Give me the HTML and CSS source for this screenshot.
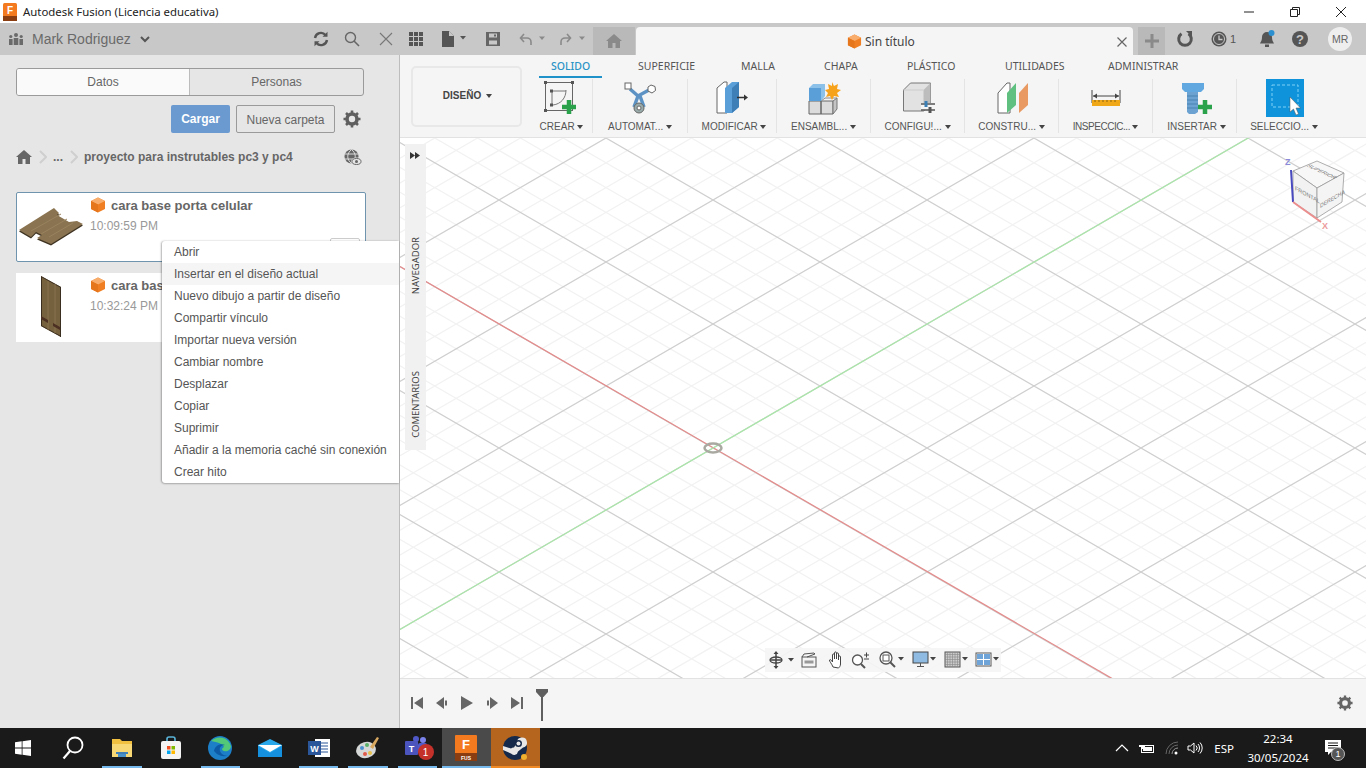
FILE: index.html
```html
<!DOCTYPE html>
<html lang="es">
<head>
<meta charset="utf-8">
<title>Autodesk Fusion</title>
<link rel="stylesheet" href="styles.css">
</head>
<body>
<div class="app">
  <header class="titlebar">
    <svg class="app-logo" width="14" height="18" viewBox="0 0 14 18"><rect width="14" height="18" rx="1.5" fill="#f47a20"/><rect y="13" width="14" height="5" fill="#8a3d10"/><text x="7" y="10.5" class="logo-f">F</text></svg>
    <span class="title-text">Autodesk Fusion (Licencia educativa)</span>
    <div class="win-controls">
      <svg width="12" height="12" viewBox="0 0 12 12"><path d="M1 6h10" stroke="#222" fill="none"/></svg>
      <svg width="12" height="12" viewBox="0 0 12 12"><path d="M1.5 3.5h7v7h-7zM3.5 3.5v-2h7v7h-2" stroke="#222" fill="none"/></svg>
      <svg width="12" height="12" viewBox="0 0 12 12"><path d="M1 1l10 10M11 1L1 11" stroke="#222" fill="none"/></svg>
    </div>
  </header>

  <div class="appbar">
    <div class="appbar-left">
      <svg width="16" height="14" viewBox="0 0 16 14" fill="#6a6a6a"><circle cx="8" cy="3" r="2"/><circle cx="2.8" cy="4.5" r="1.6"/><circle cx="13.2" cy="4.5" r="1.6"/><rect x="5.7" y="6" width="4.6" height="7"/><rect x="1" y="7" width="3.6" height="6"/><rect x="11.4" y="7" width="3.6" height="6"/></svg>
      <span class="user-name">Mark Rodriguez</span>
      <svg class="user-chevron" width="10" height="7" viewBox="0 0 10 7"><path d="M1 1l4 4 4-4" stroke="#555" stroke-width="2" fill="none"/></svg>
    </div>
    <div class="appbar-tools">
      <svg width="16" height="16" viewBox="0 0 16 16" class="t-refresh"><path d="M2 7a6 6 0 0 1 10.5-3M14 9a6 6 0 0 1-10.5 3" stroke="#555" stroke-width="2.4" fill="none"/><path d="M14.5 0.8v5h-5zM1.5 15.2v-5h5z" fill="#555"/></svg>
      <svg width="16" height="16" viewBox="0 0 16 16" class="t-search"><circle cx="6.5" cy="6.5" r="5" stroke="#666" stroke-width="1.4" fill="none"/><path d="M10 10l5 5" stroke="#666" stroke-width="1.6"/></svg>
      <svg width="14" height="14" viewBox="0 0 14 14" class="t-close"><path d="M1 1l12 12M13 1L1 13" stroke="#777" stroke-width="1.1"/></svg>
      <svg width="14" height="14" viewBox="0 0 14 14" class="t-grid" fill="#555"><path d="M0 0h4v4H0zM5 0h4v4H5zM10 0h4v4h-4zM0 5h4v4H0zM5 5h4v4H5zM10 5h4v4h-4zM0 10h4v4H0zM5 10h4v4H5zM10 10h4v4h-4z"/></svg>
      <svg width="26" height="16" viewBox="0 0 26 16" class="t-file"><path d="M0 0h7l5 5v11H0z" fill="#555"/><path d="M7 0v5h5" fill="#c8c8c8"/><path d="M18 5h6l-3 3.5z" fill="#555"/></svg>
      <svg width="14" height="14" viewBox="0 0 14 14" class="t-save"><path d="M0 0h14v14H0z" fill="#666"/><path d="M3 1.5h8v4H3zM3 8.5h8v4H3z" fill="#c8c8c8"/><path d="M8 2.500h2v2H8z" fill="#666"/></svg>
      <svg width="26" height="14" viewBox="0 0 26 14" class="t-undo"><path d="M5 2L1.500 6 5 10M2 6h6a4 4 0 0 1 4 4v3" stroke="#8a8a8a" stroke-width="1.6" fill="none"/><path d="M20 4.500h6l-3 3.500z" fill="#8a8a8a"/></svg>
      <svg width="26" height="14" viewBox="0 0 26 14" class="t-redo"><path d="M7 2l3.500 4L7 10M10 6H5a4 4 0 0 0-4 4v3" stroke="#8a8a8a" stroke-width="1.6" fill="none"/><path d="M19 4.500h6l-3 3.500z" fill="#8a8a8a"/></svg>
    </div>
    <div class="home-tab">
      <svg width="16" height="14" viewBox="0 0 16 14" fill="#8a8a8a"><path d="M8 0l8 7h-2v7H9.500V9h-3v5H2V7H0z"/></svg>
    </div>
    <div class="doc-tab">
      <svg class="doc-cube" width="15" height="15" viewBox="0 0 16 16"><path d="M8 0.500l7 3.500v8l-7 3.500-7-3.500V4z" fill="#f07f23"/><path d="M8 0.500l7 3.500-7 3.500L1 4z" fill="#f9ad6c"/><path d="M8 7.500v8L1 12V4z" fill="#e5761b"/></svg>
      <span class="doc-title">Sin título</span>
      <svg class="doc-close" width="10" height="10" viewBox="0 0 10 10"><path d="M0.500 0.500l9 9M9.500 0.500l-9 9" stroke="#666" stroke-width="1.200"/></svg>
    </div>
    <div class="plus-tab">
      <svg width="14" height="14" viewBox="0 0 14 14"><path d="M0 7h14M7 0v14" stroke="#8a8a8a" stroke-width="3"/></svg>
    </div>
    <div class="appbar-right">
      <svg width="18" height="18" viewBox="0 0 18 18" class="r-sync"><path d="M12.500 3.800A6.300 6.300 0 1 1 5.500 3.800" stroke="#555" stroke-width="3" fill="none"/><path d="M10 1h6v6z" fill="#555"/></svg>
      <span class="r-jobs">
        <svg width="16" height="16" viewBox="0 0 16 16"><circle cx="8" cy="8" r="7.500" fill="#555"/><circle cx="8" cy="8" r="5.500" fill="none" stroke="#c8c8c8"/><path d="M8 4.500v4h3.500" stroke="#c8c8c8" stroke-width="1.300" fill="none"/></svg>
        <span class="jobs-count">1</span>
      </span>
      <svg width="16" height="18" viewBox="0 0 16 18" class="r-bell"><path d="M8 2a5 5 0 0 1 5 5c0 4 1.500 5 2 6.500H1C1.500 12 3 11 3 7a5 5 0 0 1 5-5z" fill="#555"/><rect x="6" y="14.500" width="4" height="2.500" fill="#555"/><circle cx="12.500" cy="3" r="3" fill="#2c8fd0"/></svg>
      <svg width="18" height="18" viewBox="0 0 18 18" class="r-help"><circle cx="9" cy="9" r="8" fill="#555"/><text x="9" y="13.500" class="help-q">?</text></svg>
      <span class="avatar">MR</span>
    </div>
  </div>

  <div class="content">
    <aside class="datapanel">
      <div class="seg">
        <span class="seg-item seg-on">Datos</span>
        <span class="seg-item">Personas</span>
      </div>
      <div class="actions">
        <span class="btn-primary">Cargar</span>
        <span class="btn-outline">Nueva carpeta</span>
        <svg class="gear" width="18" height="18" viewBox="0 0 18 18"><circle cx="9" cy="9" r="5" fill="none" stroke="#5f5f5f" stroke-width="3.600"/><path d="M9 0.500v3M9 14.500v3M0.500 9h3M14.500 9h3M3 3l2.200 2.200M12.800 12.800L15 15M15 3l-2.200 2.200M5.200 12.800L3 15" stroke="#5f5f5f" stroke-width="2.600"/></svg>
      </div>
      <div class="crumbs">
        <svg width="16" height="14" viewBox="0 0 16 14" fill="#666"><path d="M8 0l8 7h-2v7H9.500V9h-3v5H2V7H0z"/></svg>
        <svg class="crumb-chev" width="8" height="14" viewBox="0 0 8 14"><path d="M1 1l6 6-6 6" stroke="#cfcfcf" stroke-width="2" fill="none"/></svg>
        <span class="crumb-dots">...</span>
        <svg class="crumb-chev" width="8" height="14" viewBox="0 0 8 14"><path d="M1 1l6 6-6 6" stroke="#cfcfcf" stroke-width="2" fill="none"/></svg>
        <span class="crumb-name">proyecto para instrutables pc3 y pc4</span>
        <svg class="crumb-globe" width="18" height="17" viewBox="0 0 18 17"><circle cx="7.500" cy="7.500" r="7" fill="#666"/><path d="M0.500 5h14M0.500 10h14M7.500 0.500c-5 4-5 10 0 14M7.500 0.500c5 4 5 10 0 14" stroke="#e6e6e6" stroke-width=".9" fill="none"/><ellipse cx="12.500" cy="12.500" rx="5.500" ry="4" fill="#e6e6e6"/><ellipse cx="12.500" cy="12.500" rx="4.500" ry="3" fill="none" stroke="#666"/><circle cx="12.500" cy="12.500" r="1.500" fill="#666"/></svg>
      </div>
      <div class="card card-active">
        <svg class="thumb" width="70" height="68" viewBox="0 0 70 68"><path d="M2 37L37 15l5 5-2 2 12 7 8-1 6 3-32 20-14-6 5-3-6-3-5 5z" transform="translate(0 1.500)" fill="#3f3423"/><path d="M2 37L37 15l5 5-2 2 12 7 8-1 6 3-32 20-14-6 5-3-6-3-5 5z" fill="#8a7350"/><path d="M14 38L44 21M24 41l26-15M32 44l24-14" stroke="#99835f" fill="none"/></svg>
        <div class="card-body">
          <div class="card-title">
            <svg width="16" height="16" viewBox="0 0 16 16"><path d="M8 0.500l7 3.500v8l-7 3.500-7-3.500V4z" fill="#f07f23"/><path d="M8 0.500l7 3.500-7 3.500L1 4z" fill="#f9ad6c"/><path d="M8 7.500v8L1 12V4z" fill="#e5761b"/></svg>
            <span>cara base porta celular</span>
          </div>
          <div class="card-time">10:09:59 PM</div>
        </div>
        <span class="card-more"></span>
      </div>
      <div class="card card-plain">
        <svg class="thumb" width="70" height="68" viewBox="0 0 70 68"><path d="M24 2l20 11v50L24 52z" fill="#76613f"/><path d="M24 2l20 11v1L25 3.500V52l-1 0z" fill="#3a2e20"/><path d="M44 13v50l-1-.5V13z" fill="#3a2e20"/><path d="M24 52l20 11v-1L24 51z" fill="#3a2e20"/><path d="M31 7v49M38 10v49" stroke="#87724f" fill="none"/><path d="M24 42l7 4v3l-7-4zM36 49l7 4v3l-7-4z" fill="#4c3022"/></svg>
        <div class="card-body">
          <div class="card-title">
            <svg width="16" height="16" viewBox="0 0 16 16"><path d="M8 0.500l7 3.500v8l-7 3.500-7-3.500V4z" fill="#f07f23"/><path d="M8 0.500l7 3.500-7 3.500L1 4z" fill="#f9ad6c"/><path d="M8 7.500v8L1 12V4z" fill="#e5761b"/></svg>
            <span>cara bas</span>
          </div>
          <div class="card-time">10:32:24 PM</div>
        </div>
      </div>
      <ul class="ctx-menu">
        <li>Abrir</li>
        <li class="ctx-hover">Insertar en el diseño actual</li>
        <li>Nuevo dibujo a partir de diseño</li>
        <li>Compartir vínculo</li>
        <li>Importar nueva versión</li>
        <li>Cambiar nombre</li>
        <li>Desplazar</li>
        <li>Copiar</li>
        <li>Suprimir</li>
        <li>Añadir a la memoria caché sin conexión</li>
        <li>Crear hito</li>
      </ul>
    </aside>

    <main class="workspace">
      <section class="toolbar">
        <div class="design-btn">DISEÑO <i class="caret"></i></div>
        <div class="ribbon">
          <nav class="ribbon-tabs">
            <span class="rtab rtab-on rt1">SOLIDO</span>
            <span class="rtab rt2">SUPERFICIE</span>
            <span class="rtab rt3">MALLA</span>
            <span class="rtab rt4">CHAPA</span>
            <span class="rtab rt5">PLÁSTICO</span>
            <span class="rtab rt6">UTILIDADES</span>
            <span class="rtab">ADMINISTRAR</span>
          </nav>
          <div class="tools">
            <div class="tool w62">
              <svg class="tool-ic" width="40" height="40" viewBox="542 79 40 40"><rect x="545.500" y="82.500" width="27" height="28" fill="none" stroke="#666"/><path d="M544 81h3v3h-3zM571 81h3v3h-3zM544 109h3v3h-3z" fill="#555"/><path d="M552 91h14M552 91v14M566 90c0 8-5 14-13 15" stroke="#777" fill="none"/><path d="M550 89.500h3v3h-3zM550 103.500h3v3h-3z" fill="#555"/><path d="M569 100v14M562 107h14" stroke="#2aa24c" stroke-width="4.500"/></svg>
              <span class="tool-lab">CREAR <i class="caret"></i></span>
            </div>
            <div class="tool w95">
              <svg class="tool-ic" width="40" height="40" viewBox="621 79 40 40"><path d="M631 89l8 7 11-6M639 96l-4 11M641 96l4 11" stroke="#5d93c4" stroke-width="3.500" fill="none"/><rect x="626" y="83" width="6" height="6" fill="#fff" stroke="#666"/><path d="M652 85l4 1.500.5 4-3.500 2.500-4-2 0-4z" fill="#fff" stroke="#666"/><circle cx="640" cy="108" r="5" fill="#9aa" stroke="#666"/><circle cx="640" cy="108" r="2" fill="#fff" stroke="#666"/></svg>
              <span class="tool-lab">AUTOMAT... <i class="caret"></i></span>
            </div>
            <div class="tool w89">
              <svg class="tool-ic" width="40" height="40" viewBox="713 79 40 40"><path d="M718 113V88l7-6h3v31z" fill="#fff" stroke="#666"/><path d="M726 113V88l7-6h7v25l-7 6z" fill="#5a9fd8"/><path d="M733 113V88l7-6v25z" fill="#3e7fb8"/><path d="M738 97.500h8" stroke="#333" stroke-width="1.500"/><path d="M745 94.500l4 3-4 3z" fill="#333"/></svg>
              <span class="tool-lab lab-shift">MODIFICAR <i class="caret"></i></span>
            </div>
            <div class="tool w94">
              <svg class="tool-ic" width="40" height="40" viewBox="804 79 40 40"><path d="M809 101h12v13h-12zM821 101h12v13h-12z" fill="#dcdcdc" stroke="#666"/><path d="M833 101l4-3v11l-4 5z" fill="#c4c4c4" stroke="#777"/><path d="M821 101l4-3h12" fill="none" stroke="#888"/><path d="M809 88h12v13h-12z" fill="#5a9fd8"/><path d="M809 88l4-4h12l-4 4zM821 88l4-4v12l-4 5z" fill="#8cc1ea"/><path d="M832 82l2 4 4-2-1 5 4 1-4 3 2 4-5-1-2 4-2-4-4 1 2-4-3-3 4-1-1-5 4 2z" fill="#f7a21b"/></svg>
              <span class="tool-lab">ENSAMBL... <i class="caret"></i></span>
            </div>
            <div class="tool w94">
              <svg class="tool-ic" width="40" height="40" viewBox="898 79 40 40"><path d="M903.500 90l7-7h20v22l-7 6h-20z" fill="#e2e2e2" stroke="#777"/><path d="M923.500 111V90l7-7v22z" fill="#bdbdbd"/><path d="M903.500 90h20" stroke="#ccc"/><path d="M921 103h14v7h-14z" fill="#f5f5f5"/><path d="M921 104h14M921 110h14" stroke="#555" stroke-width="1.500"/><path d="M926 101v6" stroke="#3c7fb5" stroke-width="3"/><path d="M930 107v6" stroke="#555" stroke-width="3"/></svg>
              <span class="tool-lab">CONFIGU!... <i class="caret"></i></span>
            </div>
            <div class="tool w94">
              <svg class="tool-ic" width="40" height="40" viewBox="992 79 40 40"><path d="M998 113V93l9-10h3v30z" fill="#fff" stroke="#666"/><path d="M1007 113V93l9-10v22z" fill="#5fc080"/><path d="M1019 113V93l9-10v22z" fill="#e89a62"/></svg>
              <span class="tool-lab">CONSTRU... <i class="caret"></i></span>
            </div>
            <div class="tool w94">
              <svg class="tool-ic" width="40" height="40" viewBox="1087 79 40 40"><path d="M1093 90v13M1121 90v13" stroke="#444"/><path d="M1094 96h26" stroke="#444"/><path d="M1094 96l4-2.500v5zM1120 96l-4-2.500v5z" fill="#444"/><path d="M1093 100h28v6h-28z" fill="#f0a818"/><path d="M1096 100v2M1100 100v2M1104 100v2M1108 100v2M1112 100v2M1116 100v2" stroke="#8a6210"/></svg>
              <span class="tool-lab lab-tight">INSPECCIC... <i class="caret"></i></span>
            </div>
            <div class="tool w84">
              <svg class="tool-ic" width="40" height="40" viewBox="1175 79 40 40"><path d="M1182 83h22v6l-3 3h-16l-3-3z" fill="#62a8e0"/><path d="M1187 92h11v20l-3 2h-6l-2-2z" fill="#6ba2d2"/><path d="M1187 96h11M1187 100h11M1187 104h11M1187 108h11" stroke="#4a82b2"/><path d="M1205 100v14M1198 107h14" stroke="#2aa24c" stroke-width="4.500"/></svg>
              <span class="tool-lab lab-shift">INSERTAR <i class="caret"></i></span>
            </div>
            <div class="tool w94 tool-last">
              <svg class="tool-ic" width="40" height="40" viewBox="1264 79 40 40"><rect x="1266" y="79" width="38" height="38" fill="#0f94dc"/><rect x="1272" y="85" width="26" height="22" fill="none" stroke="#7fd0f5" stroke-dasharray="3 2"/><path d="M1290 97v15l3.500-3 2.500 6 2.500-1-2.500-6h4.500z" fill="#fff" stroke="#555" stroke-width=".5"/></svg>
              <span class="tool-lab">SELECCIO... <i class="caret"></i></span>
            </div>
          </div>
        </div>
      </section>

      <section class="canvas">
        <svg class="grid" width="966" height="540" viewBox="0 0 966 540">
          <defs>
            <pattern id="iso" x="313" y="310" width="214" height="124" patternUnits="userSpaceOnUse">
              <path d="M0 24.800L171.200 124M0 49.600L128.400 124M0 74.400L85.600 124M0 99.200L42.800 124M42.800 0L214 99.200M85.600 0L214 74.400M128.400 0L214 49.600M171.200 0L214 24.800M0 99.200L171.200 0M0 74.400L128.400 0M0 49.600L85.600 0M0 24.800L42.800 0M42.800 124L214 24.800M85.600 124L214 49.600M128.400 124L214 74.400M171.200 124L214 99.200" stroke="#f2f2f2" stroke-width="1.300" fill="none"/>
              <path d="M0 0L214 124M0 124L214 0" stroke="#cfcfcf" stroke-width="1.200" fill="none"/>
            </pattern>
          </defs>
          <rect width="966" height="540" fill="#fff"/>
          <rect width="966" height="540" fill="url(#iso)"/>
          <path d="M0 128.600L713 541" stroke="#e58b8b" stroke-width="1.200" fill="none"/>
          <path d="M0 491.400L850 -1" stroke="#a9e6a9" stroke-width="1.200" fill="none"/>
          <ellipse cx="313" cy="310" rx="8.500" ry="4.500" fill="none" stroke="#a9a9a2" stroke-width="2.500"/>
        </svg>
        <div class="side-rail">
          <svg class="rail-arrows" width="10" height="7" viewBox="0 0 10 7"><path d="M0 0l5 3.500L0 7zM5 0l5 3.500L5 7z" fill="#333"/></svg>
          <span class="rail-label rail-nav">NAVEGADOR</span>
          <span class="rail-label rail-com">COMENTARIOS</span>
        </div>
        <svg class="navcube" width="70" height="80" viewBox="1282 155 70 80">
          <path d="M1293 171l24-10 27 12-27 15z" fill="#f7f7f7" stroke="#999" stroke-width=".8"/>
          <path d="M1293 171l24 17v30l-24-16z" fill="#f2f2f2" stroke="#999" stroke-width=".8"/>
          <path d="M1317 188l27-15-2 29-25 16z" fill="#f4f4f4" stroke="#999" stroke-width=".8"/>
          <path d="M1293 202l-2-32" stroke="#4a4ac0" stroke-width="2"/>
          <path d="M1293 202l28 20" stroke="#ec8e8e" stroke-width="2"/>
          <text x="1285" y="165" class="ax-z">Z</text>
          <text x="1322" y="229" class="ax-x">X</text>
          <text class="cube-t" transform="matrix(.9 .5 0 1 1295 190)" font-size="6">FRONTAL</text>
          <text class="cube-t" transform="matrix(.85 -.5 0 1 1320 208)" font-size="6">DERECHA</text>
          <text class="cube-t" transform="matrix(.9 .42 -.9 .42 1306 166)" font-size="6">SUPERIOR</text>
        </svg>
        <div class="navbar">
          <svg class="nb nb-orbit" width="26" height="18" viewBox="0 0 26 18"><path d="M7 1v16M1 9h12" stroke="#444" stroke-width="1.500"/><path d="M7 0l-2.500 3h5zM7 18l-2.500-3h5z" fill="#444"/><ellipse cx="7" cy="9" rx="6" ry="3" fill="none" stroke="#444" stroke-width="1.300"/><path d="M19 7h6l-3 3.500z" fill="#444"/></svg>
          <svg class="nb nb-cam" width="16" height="16" viewBox="0 0 16 16"><rect x="1" y="5" width="14" height="10" fill="#f5f5f5" stroke="#555"/><rect x="3.500" y="8.500" width="9" height="3" fill="#999"/><path d="M1 5l2-3 10-1 1 1-8 3" fill="none" stroke="#555"/></svg>
          <svg class="nb nb-hand" width="18" height="18" viewBox="0 0 18 18"><path d="M5 16C4 13 1 10 1.500 9c.8-1 2 0 3 2V4c0-1.500 2-1.500 2 0v4-6c0-1.500 2-1.500 2 0v6-5c0-1.500 2-1.500 2 0v6-3c0-1.500 2-1.500 2 0v7c0 2-1 3-2 4z" fill="#fff" stroke="#444" stroke-width="1"/></svg>
          <svg class="nb nb-zoom" width="18" height="18" viewBox="0 0 18 18"><circle cx="6.500" cy="9" r="5" fill="#fff" stroke="#555" stroke-width="1.300"/><path d="M10 13l4 4" stroke="#555" stroke-width="2"/><path d="M13 4h5M15.500 1.500v5M13 8h5" stroke="#444"/></svg>
          <svg class="nb nb-fit" width="26" height="18" viewBox="0 0 26 18"><circle cx="7" cy="7" r="6" fill="#fff" stroke="#555" stroke-width="1.300"/><rect x="4" y="4" width="6" height="6" fill="none" stroke="#555"/><path d="M11 11l5 5" stroke="#555" stroke-width="2"/><path d="M19 6h6l-3 3.500z" fill="#444"/></svg>
          <svg class="nb nb-disp" width="24" height="18" viewBox="0 0 24 18"><rect x="1" y="1" width="15" height="11" fill="#8fbbe2" stroke="#444"/><path d="M8.500 12v3M5 15.500h7" stroke="#555"/><path d="M18 6h6l-3 3.500z" fill="#444"/></svg>
          <svg class="nb nb-gridic" width="24" height="18" viewBox="0 0 24 18"><rect x="1" y="1" width="15" height="15" fill="#ccc" stroke="#555"/><path d="M3.500 1v15M6 1v15M8.500 1v15M11 1v15M13.500 1v15M1 3.500h15M1 6h15M1 8.500h15M1 11h15M1 13.500h15" stroke="#888" stroke-width=".6"/><path d="M18 6h6l-3 3.500z" fill="#444"/></svg>
          <svg class="nb nb-views" width="24" height="18" viewBox="0 0 24 18"><rect x="1" y="2" width="15" height="13" fill="#fff" stroke="#555"/><path d="M2 3h6v5H2zM9 3h6v5H9zM2 9h6v5H2zM9 9h6v5H9z" fill="#6ea4d8"/><path d="M18 6h6l-3 3.500z" fill="#444"/></svg>
        </div>
      </section>

      <section class="timeline">
        <svg class="tl" width="12" height="12" viewBox="0 0 12 12" fill="#666"><path d="M0 0h2v12H0zM12 0v12L3 6z"/></svg>
        <svg class="tl" width="12" height="12" viewBox="0 0 12 12" fill="#666"><path d="M8 0v12L0 6zM9 3.500h2v5H9z"/></svg>
        <svg class="tl" width="12" height="14" viewBox="0 0 12 14" fill="#666"><path d="M0 0l12 7-12 7z"/></svg>
        <svg class="tl" width="12" height="12" viewBox="0 0 12 12" fill="#666"><path d="M4 0v12l8-6zM1 3.500h2v5H1z"/></svg>
        <svg class="tl" width="12" height="12" viewBox="0 0 12 12" fill="#666"><path d="M10 0h2v12h-2zM0 0v12l9-6z"/></svg>
        <svg class="playhead" width="12" height="32" viewBox="0 0 12 32"><path d="M0 0h12v3l-4.500 5H4.500L0 3z" fill="#5f5f5f"/><path d="M6 6v26" stroke="#5f5f5f" stroke-width="2"/></svg>
        <svg class="tl-gear" width="16" height="16" viewBox="0 0 18 18"><circle cx="9" cy="9" r="5" fill="none" stroke="#666" stroke-width="3.600"/><path d="M9 0.500v3M9 14.500v3M0.500 9h3M14.500 9h3M3 3l2.200 2.200M12.800 12.800L15 15M15 3l-2.200 2.200M5.200 12.800L3 15" stroke="#666" stroke-width="2.600"/></svg>
      </section>
    </main>
  </div>

  <footer class="taskbar">
    <div class="task-icons">
      <span class="task task-win"><svg width="16" height="16" viewBox="0 0 16 16" fill="#fff"><path d="M0 2.300L6.700 1.300v6.300H0zM7.500 1.200L16 0v7.600H7.500zM0 8.400h6.700v6.400L0 13.800zM7.500 8.400H16V16l-8.500-1.200z"/></svg></span>
      <span class="task"><svg width="22" height="24" viewBox="0 0 22 24"><circle cx="13" cy="9" r="7.500" fill="none" stroke="#fff" stroke-width="1.800"/><path d="M8 15L1.500 22.500" stroke="#fff" stroke-width="2.200"/></svg></span>
      <span class="task on"><svg width="22" height="20" viewBox="0 0 22 20"><path d="M1 1h8l2 2h10v16H1z" fill="#f2c040"/><path d="M1 6h20v13H1z" fill="#f8d775"/><path d="M7 19v-5h8v5z" fill="#4a90c8"/><path d="M5 14h12v2H5z" fill="#3f7fb5"/></svg></span>
      <span class="task"><svg width="22" height="24" viewBox="0 0 22 24"><rect x="1" y="5" width="20" height="18" rx="2" fill="#f4f4f4"/><path d="M7 5V3a2 2 0 0 1 2-2h4a2 2 0 0 1 2 2v2" stroke="#59b4d9" stroke-width="1.600" fill="none"/><path d="M7 10h3.500v3.500H7z" fill="#f25022"/><path d="M11.500 10H15v3.500h-3.500z" fill="#7fba00"/><path d="M7 14.500h3.500V18H7z" fill="#00a4ef"/><path d="M11.500 14.500H15V18h-3.500z" fill="#ffb900"/></svg></span>
      <span class="task on"><svg width="24" height="24" viewBox="0 0 24 24"><circle cx="12" cy="12" r="12" fill="#1c7fc8"/><path d="M3 5a12 12 0 0 1 20 5c0 4-4 6-7 5s-2-3 0-4c-1-3-7-5-13-6z" fill="#52c878"/><path d="M6 15c1-6 7-8 11-6-4 0-6 3-5 6s5 6 9 4a12 12 0 0 1-15-4z" fill="#0d5ba6"/></svg></span>
      <span class="task"><svg width="24" height="18" viewBox="0 0 24 18"><path d="M0 6L12 0l12 6v12H0z" fill="#28a8ea"/><path d="M0 6l12 7 12-7" fill="#fff"/><path d="M0 7l12 7 12-7v11H0z" fill="#1490df"/></svg></span>
      <span class="task on"><svg width="22" height="20" viewBox="0 0 22 20"><rect x="7" y="1" width="15" height="18" fill="#fff"/><path d="M12 5h8M12 8h8M12 11h8M12 14h8" stroke="#2b579a"/><rect y="3" width="13" height="14" fill="#2b579a"/><text x="6.500" y="14" class="word-w">W</text></svg></span>
      <span class="task on"><svg width="24" height="24" viewBox="0 0 24 24"><ellipse cx="10" cy="14" rx="10" ry="8" fill="#d6d8d8" transform="rotate(-15 10 14)"/><circle cx="6" cy="12" r="2" fill="#4a90d0"/><circle cx="9" cy="18" r="2" fill="#e05a4a"/><circle cx="14" cy="17" r="2" fill="#e5c04a"/><circle cx="11" cy="9" r="2" fill="#5ab06a"/><path d="M14 11L21 1l2 1-6 11z" fill="#d9a860"/></svg></span>
      <span class="task on teams"><svg width="24" height="24" viewBox="0 0 24 24"><circle cx="18" cy="4" r="3" fill="#7b83eb"/><circle cx="11" cy="3" r="3" fill="#5059c9"/><rect x="13" y="7" width="9" height="10" rx="2" fill="#5059c9"/><rect y="5" width="13" height="14" rx="1" fill="#4b53bc"/><text x="6.500" y="16" class="word-w">T</text></svg><span class="badge">1</span></span>
      <span class="task on fus"><svg width="22" height="26" viewBox="0 0 22 26"><rect width="22" height="26" rx="1" fill="#f47a20"/><rect y="18" width="22" height="8" fill="#8a3d10"/><text x="11" y="14" class="fus-f">F</text><text x="11" y="24.500" class="fus-s">FUS</text></svg></span>
      <span class="task on steam"><svg width="24" height="24" viewBox="0 0 24 24"><circle cx="12" cy="12" r="12" fill="#152a4a"/><path d="M0 14l8 3.500a4 4 0 0 0 7-2l5-4a5 5 0 1 0-6-5l-3 5a4 4 0 0 0-3 1L0 10z" fill="#e7e7e7"/><circle cx="15.500" cy="7.500" r="3.500" fill="#152a4a"/><circle cx="15.500" cy="7.500" r="2" fill="#e7e7e7"/><circle cx="21" cy="21" r="3" fill="#f0b030"/></svg></span>
    </div>
    <div class="tray">
      <svg class="tr-up" width="14" height="8" viewBox="0 0 14 8"><path d="M1 7l6-6 6 6" stroke="#fff" stroke-width="1.200" fill="none"/></svg>
      <svg class="tr-bat" width="16" height="12" viewBox="0 0 16 12"><path d="M3 0v3M5 0v3M1 3h6v2H5v2H3V5H1z" fill="#fff"/><rect x="3.500" y="3.500" width="12" height="7" fill="none" stroke="#fff"/><rect x="5" y="5" width="9" height="4" fill="#fff"/></svg>
      <svg class="tr-wifi" width="14" height="14" viewBox="0 0 14 14"><path d="M1 13a12 12 0 0 1 12-12M4 13a9 9 0 0 1 9-9" stroke="#666" fill="none"/><path d="M7 13a6 6 0 0 1 6-6" stroke="#999" fill="none"/><circle cx="11" cy="12" r="1.500" fill="#fff"/></svg>
      <svg class="tr-sound" width="16" height="14" viewBox="0 0 16 14"><path d="M1 5h2.500L7 2v10L3.500 9H1z" fill="none" stroke="#fff"/><path d="M9 4.500a3.500 3.500 0 0 1 0 5M11 3a6 6 0 0 1 0 8M13 1.500a8 8 0 0 1 0 11" stroke="#fff" fill="none"/></svg>
      <span class="tr-lang">ESP</span>
      <span class="tr-clock"><span>22:34</span><span>30/05/2024</span></span>
      <span class="tr-notif"><svg width="18" height="16" viewBox="0 0 18 16"><path d="M0 0h16v12H6l-3 3v-3H0z" fill="#fff"/><path d="M3 3h10M3 5.500h10M3 8h10" stroke="#1a1a1a"/></svg><span class="notif-badge">1</span></span>
    </div>
  </footer>
</div>
</body>
</html>
```

FILE: styles.css
```css
* { box-sizing: border-box; }
html, body { margin: 0; height: 100%; overflow: hidden; }
body { font-family: "Liberation Sans", Arial, sans-serif; font-size: 12px; color: #666; }
svg { display: block; flex: none; }
.app { width: 1366px; height: 768px; display: flex; flex-direction: column; overflow: hidden; background: #fff; }

.titlebar { height: 23px; flex: none; background: #fff; display: flex; align-items: center; padding-left: 3px; }
.logo-f { font: bold 10px "Liberation Sans", sans-serif; fill: #fff; text-anchor: middle; }
.title-text { margin-left: 6px; font-family: "Noto Sans", sans-serif; font-size: 11.400px; color: #222; }
.win-controls { margin-left: auto; display: flex; gap: 34px; padding-right: 19px; }

.appbar { height: 32px; flex: none; background: #c8c8c8; display: flex; align-items: flex-end; position: relative; }
.appbar-left { width: 308px; height: 32px; display: flex; align-items: center; padding-left: 8px; flex: none; }
.user-name { margin-left: 8px; font-size: 14px; color: #6a6a6a; }
.user-chevron { margin-left: 9px; }
.appbar-tools { width: 285px; height: 32px; display: flex; align-items: center; flex: none; }
.t-refresh { margin-left: 5px; }
.t-search { margin-left: 15px; }
.t-close { margin-left: 19px; }
.t-grid { margin-left: 16px; }
.t-file { margin-left: 19px; }
.t-save { margin-left: 18px; }
.t-undo { margin-left: 19px; }
.t-redo { margin-left: 15px; }
.home-tab { width: 42px; height: 28px; background: #b9b9b9; display: flex; align-items: center; justify-content: center; flex: none; }
.doc-tab { margin-left: 1px; width: 497px; height: 28px; background: #f5f5f5; border-radius: 4px 4px 0 0; display: flex; align-items: center; flex: none; position: relative; padding-left: 211px; }
.doc-title { margin-left: 3px; font-family: "Noto Sans", sans-serif; font-size: 12px; color: #444; }
.doc-close { position: absolute; right: 6px; top: 10px; }
.plus-tab { margin-left: 5px; width: 27px; height: 28px; background: #b9b9b9; display: flex; align-items: center; justify-content: center; flex: none; }
.appbar-right { flex: 1; height: 32px; display: flex; align-items: center; padding-left: 11px; }
.r-jobs { margin-left: 17px; display: flex; align-items: center; gap: 3px; }
.jobs-count { font-size: 11px; color: #555; }
.r-bell { margin-left: 23px; }
.r-help { margin-left: 16px; }
.avatar { margin-left: 19px; width: 24px; height: 24px; border-radius: 50%; background: #eee; color: #666; font-size: 10.500px; display: flex; align-items: center; justify-content: center; }

.content { flex: 1; display: flex; min-height: 0; }
.datapanel { width: 400px; flex: none; background: #e6e6e6; border-right: 1px solid #bdbdbd; padding: 13px 34px 0 16px; position: relative; }
.seg { width: 348px; height: 28px; display: flex; border: 1px solid #9a9a9a; border-radius: 3px; overflow: hidden; }
.seg-item { flex: 1; display: flex; align-items: center; justify-content: center; }
.seg-on { flex: none; width: 173px; background: #fafafa; border-right: 1px solid #bcbcbc; }
.actions { margin-top: 9px; height: 28px; width: 348px; display: flex; justify-content: flex-end; align-items: center; }
.btn-primary { width: 59px; height: 28px; background: #6a9ad0; color: #fff; font-weight: bold; border-radius: 2px; display: flex; align-items: center; justify-content: center; }
.btn-outline { margin-left: 6px; width: 99px; height: 28px; border: 1px solid #9a9a9a; border-radius: 2px; display: flex; align-items: center; justify-content: center; padding-top: 1px; }
.gear { margin-left: 8px; margin-right: 3px; }
.crumbs { margin-top: 14px; height: 20px; width: 348px; display: flex; align-items: center; }
.crumb-chev { margin: 0 6px 0 7px; }
.crumb-dots { font-weight: bold; }
.crumb-name { font-weight: bold; }
.crumb-globe { margin-left: auto; margin-right: 2px; }
.card { margin-top: 25px; width: 350px; height: 70px; background: #fff; display: flex; position: relative; border-radius: 2px; border: 1px solid transparent; }
.card + .card { margin-top: 11px; height: 69px; border-radius: 0; }
.card-active { border-color: #6f94ae; }
.thumb { width: 70px; height: 68px; }
.card-body { padding: 4px 0 0 3px; }
.card-plain .card-body { padding-top: 3px; }
.card-title { display: flex; align-items: center; gap: 5px; font-size: 13px; font-weight: bold; color: #666; white-space: nowrap; }
.card-time { margin-top: 6px; color: #999; }
.card-more { position: absolute; right: 5px; top: 45px; width: 30px; height: 22px; border: 1px solid #ccc; border-radius: 2px; }
.ctx-menu { position: absolute; left: 162px; top: 186px; width: 237px; margin: 0; padding: 0; list-style: none; background: #fff; border-radius: 3px 0 0 3px; box-shadow: -1px 0 2px rgba(0,0,0,.25), 0 1px 2px rgba(0,0,0,.2); }
.ctx-menu li { height: 22px; line-height: 22px; padding-left: 12px; color: #555; white-space: nowrap; }
.ctx-menu .ctx-hover { background: #f5f5f5; }

.workspace { flex: 1; display: flex; flex-direction: column; min-width: 0; }
.toolbar { height: 83px; flex: none; background: #f5f5f5; border-bottom: 1px solid #e2e2e2; display: flex; padding: 11px 0 0 11px; }
.design-btn { width: 111px; height: 61px; border: 2px solid #e8e8e8; border-radius: 5px; display: flex; align-items: center; justify-content: center; gap: 5px; font-weight: bold; font-size: 10px; color: #444; flex: none; padding: 0 0 2px 2px; }
.caret { display: inline-block; width: 0; height: 0; border: 3px solid transparent; border-top: 4px solid #444; border-bottom: 0; vertical-align: middle; }
.ribbon { margin-top: -11px; flex: 1; display: flex; flex-direction: column; min-width: 0; }
.ribbon-tabs { height: 23px; padding: 5px 0 0 29px; display: flex; }
.rtab { font-family: "Noto Sans", sans-serif; font-size: 10.500px; color: #555; position: relative; line-height: 13px; flex: none; }
.rt1 { width: 87px; }
.rt2 { width: 103px; }
.rt3 { width: 83px; }
.rt4 { width: 83px; }
.rt5 { width: 98px; }
.rt6 { width: 103px; }
.rtab-on { color: #2a93c5; font-weight: 500; }
.rtab-on::after { content: ""; position: absolute; left: -12px; width: 63px; top: 16px; height: 2px; background: #1f93c9; }
.tools { display: flex; padding-left: 9px; margin-top: 1px; }
.tool { position: relative; height: 54px; display: flex; flex-direction: column; align-items: center; border-right: 1px solid #e4e4e4; flex: none; }
.tool-last { border-right: 0; }
.tool-lab { margin-top: 2px; font-size: 10px; color: #555; white-space: nowrap; }
.lab-shift { margin-left: 4px; }
.lab-tight { letter-spacing: -.45px; }
.w62 { width: 62px; }
.w95 { width: 95px; }
.w89 { width: 89px; }
.w94 { width: 94px; }
.w84 { width: 84px; }

.canvas { flex: 1; position: relative; min-height: 0; overflow: hidden; background: #fff; }
.grid { position: absolute; left: 0; top: 0; }
.side-rail { position: absolute; left: 5px; top: 6px; width: 21px; height: 306px; background: #f1f1f1; }
.rail-arrows { position: absolute; left: 5px; top: 8px; }
.rail-label { position: absolute; left: 4px; writing-mode: vertical-rl; transform: rotate(180deg); font-family: "Noto Sans", sans-serif; font-size: 9.500px; color: #444; line-height: 13px; }
.rail-nav { top: 93px; }
.rail-com { top: 227px; }
.navcube { position: absolute; left: 882px; top: 17px; }
.ax-z { font: bold 9px "Liberation Sans", sans-serif; fill: #8a8ad8; }
.ax-x { font: bold 9px "Liberation Sans", sans-serif; fill: #ec9a9a; }
.cube-t { font-family: "Liberation Sans", sans-serif; fill: #777; }
.navbar { position: absolute; left: 365px; top: 510px; width: 236px; height: 24px; background: rgba(245,245,245,.9); display: flex; align-items: center; padding-left: 4px; }
.nb-cam { margin-left: 6px; }
.nb-hand { margin-left: 11px; }
.nb-zoom { margin-left: 5px; }
.nb-fit { margin-left: 10px; }
.nb-disp { margin-left: 7px; }
.nb-gridic { margin-left: 8px; }
.nb-views { margin-left: 7px; }

.timeline { height: 50px; flex: none; background: #f5f5f5; border-top: 1px solid #e2e2e2; display: flex; align-items: center; padding: 0 0 2px 11px; gap: 13px; position: relative; }
.playhead { margin-top: 4px; }
.tl-gear { position: absolute; right: 13px; top: 16px; }

.taskbar { height: 40px; flex: none; background: #1a1a1a; display: flex; justify-content: space-between; }
.task-icons { display: flex; margin-left: -1px; }
.task { position: relative; width: 49.200px; height: 40px; display: flex; align-items: center; justify-content: center; }
.task-win { padding-right: 2px; }
.task.on::after { content: ""; position: absolute; left: 5px; right: 5px; bottom: 0; height: 2px; background: #76b9ed; }
.task.fus { background: #4a4a4a; }
.task.fus::after { left: 0; right: 0; }
.task.steam { background: #b5651d; }
.task.steam::after { left: 0; right: 0; background: #f08a24; }
.word-w { font: bold 9px "Liberation Sans", sans-serif; fill: #fff; text-anchor: middle; }
.fus-f { font: bold 13px "Liberation Sans", sans-serif; fill: #fff; text-anchor: middle; }
.fus-s { font: bold 5px "Liberation Sans", sans-serif; fill: #fff; text-anchor: middle; }
.help-q { font: bold 13px "Liberation Sans", sans-serif; fill: #c8c8c8; text-anchor: middle; }
.badge { position: absolute; left: 25px; top: 16px; width: 16px; height: 16px; border-radius: 50%; background: #c4312b; color: #fff; font-size: 10px; display: flex; align-items: center; justify-content: center; }
.tray { display: flex; align-items: center; color: #fff; padding-right: 23px; }
.tr-bat { margin-left: 9px; }
.tr-wifi { margin-left: 11px; }
.tr-sound { margin-left: 8px; }
.tr-lang { margin-left: 11px; font-family: "Noto Sans", sans-serif; font-size: 11.500px; }
.tr-clock { margin-left: 12px; width: 64px; display: flex; flex-direction: column; align-items: center; font-family: "Noto Sans", sans-serif; font-size: 11.500px; line-height: 19px; padding-bottom: 1px; }
.tr-notif { position: relative; margin-left: 15px; }
.notif-badge { position: absolute; left: 6px; top: 7px; width: 14px; height: 14px; border-radius: 50%; background: #555; border: 1px solid #bbb; font-size: 9px; display: flex; align-items: center; justify-content: center; color: #fff; }
```
